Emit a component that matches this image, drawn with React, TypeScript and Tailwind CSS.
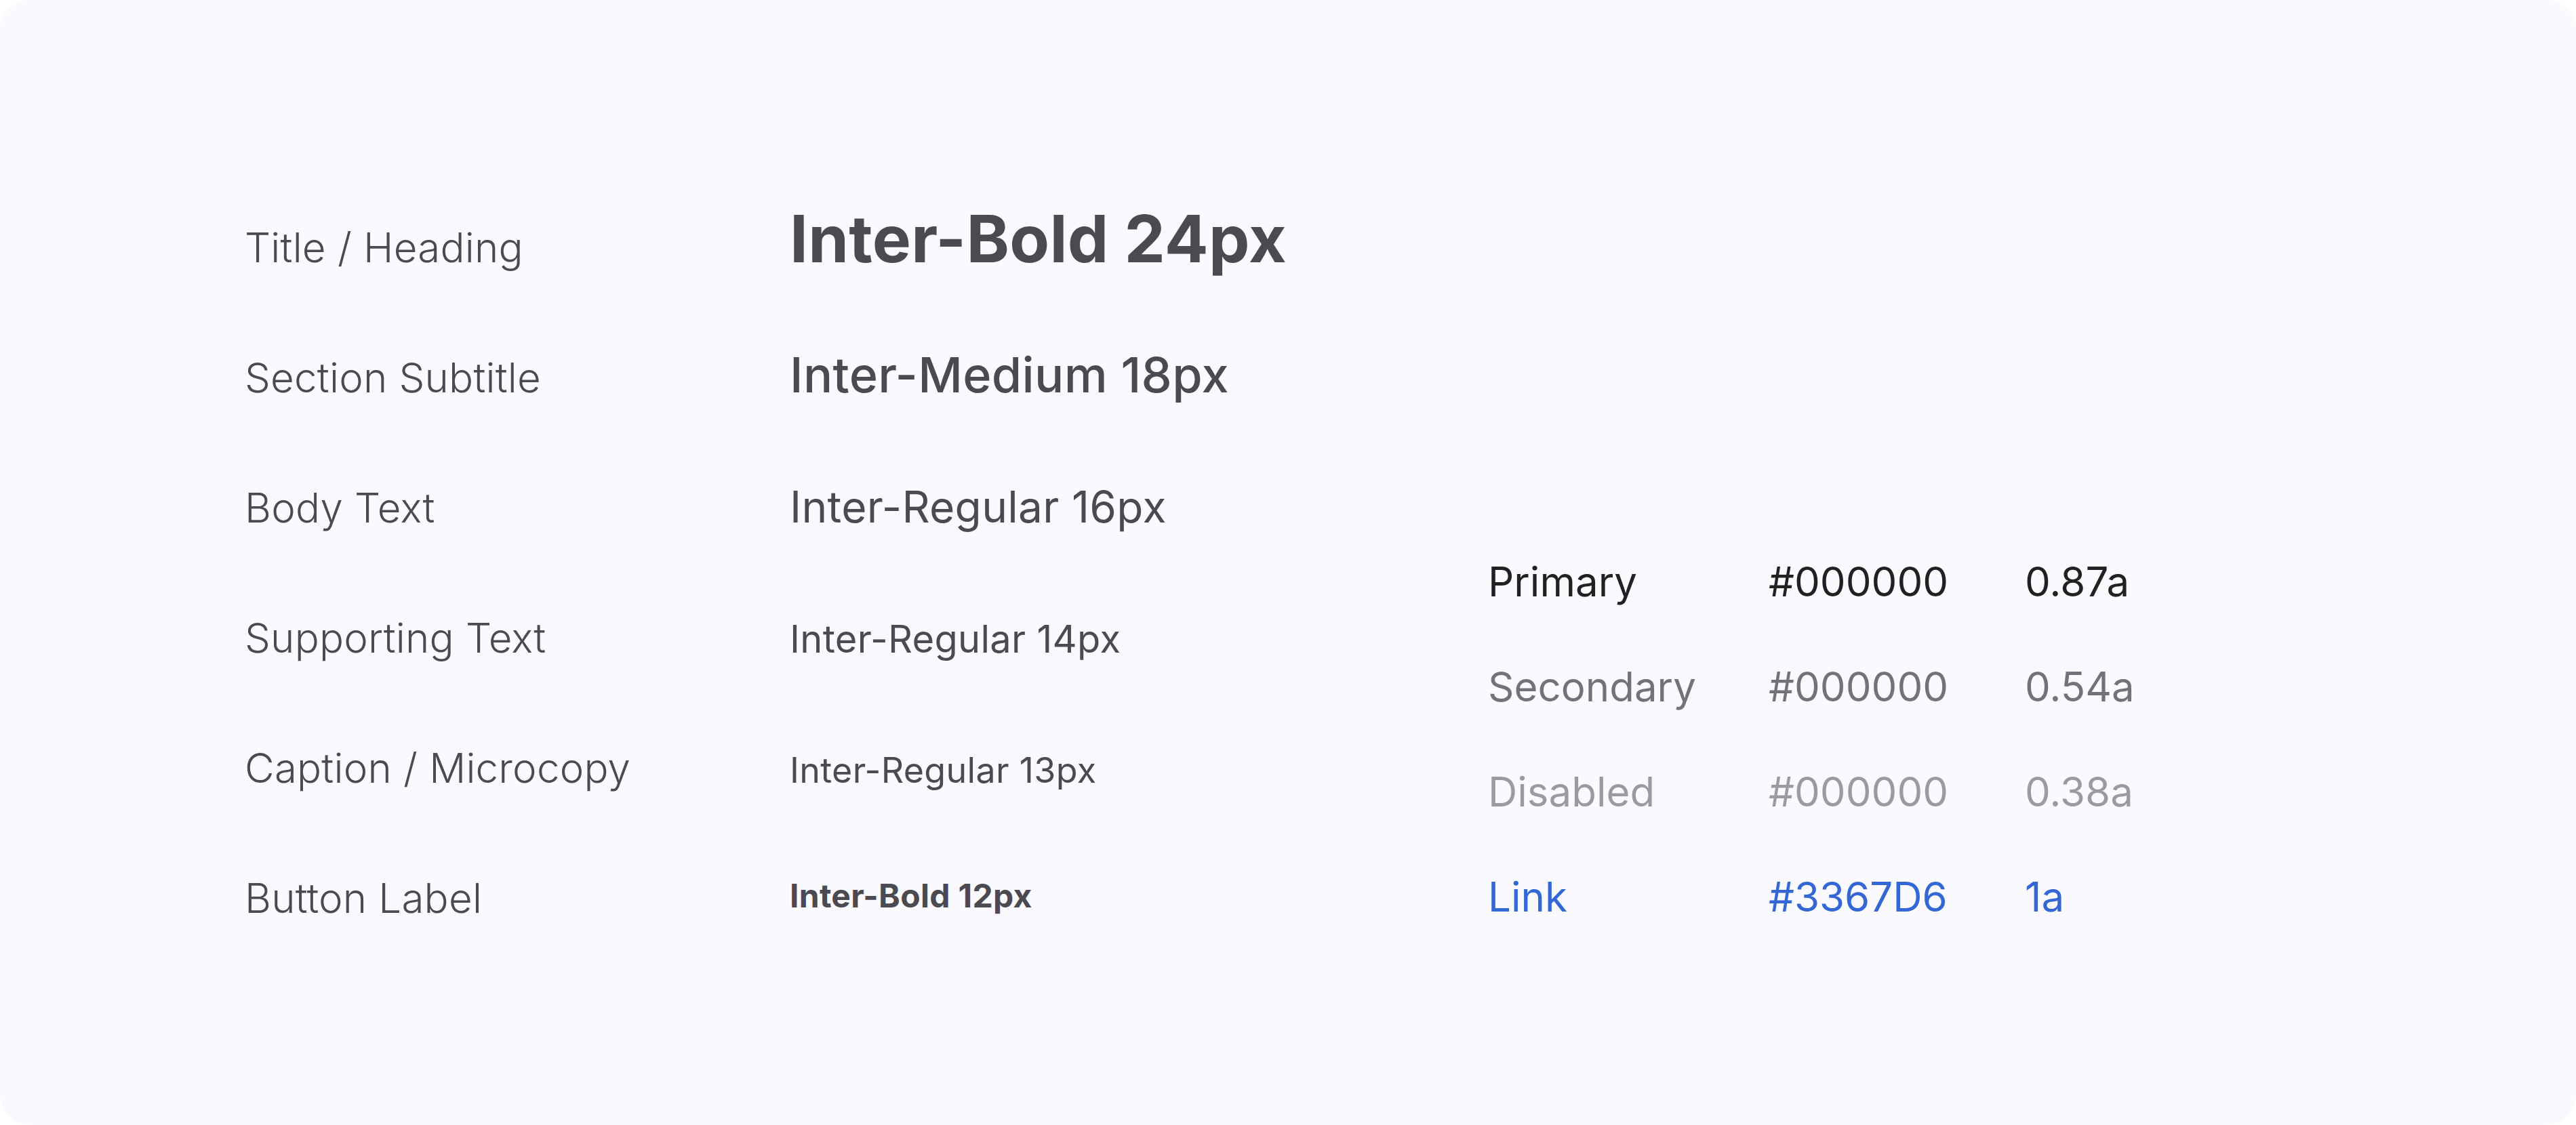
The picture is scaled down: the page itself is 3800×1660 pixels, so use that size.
import React from 'react';

const styles = [
  { label: 'Title / Heading', value: 'Inter-Bold 24px', cls: 'text-[96px] font-bold' },
  { label: 'Section Subtitle', value: 'Inter-Medium 18px', cls: 'text-[72px] font-medium' },
  { label: 'Body Text', value: 'Inter-Regular 16px', cls: 'text-[64px] font-normal' },
  { label: 'Supporting Text', value: 'Inter-Regular 14px', cls: 'text-[56px] font-normal' },
  { label: 'Caption / Microcopy', value: 'Inter-Regular 13px', cls: 'text-[52px] font-normal' },
  { label: 'Button Label', value: 'Inter-Bold 12px', cls: 'text-[48px] font-bold -translate-y-2' },
];

const colors = [
  { name: 'Primary', hex: '#000000', alpha: '0.87a', cls: 'text-black/[0.87]' },
  { name: 'Secondary', hex: '#000000', alpha: '0.54a', cls: 'text-black/[0.54]' },
  { name: 'Disabled', hex: '#000000', alpha: '0.38a', cls: 'text-black/[0.38]' },
  { name: 'Link', hex: '#3367D6', alpha: '1a', cls: 'text-[#3367d6]' },
];

export default function App() {
  return (
    <div className="h-[1660px] w-[3800px] bg-white font-[Inter,sans-serif]">
      <div className="flex h-full w-full items-start rounded-[44px] bg-[#faf9fe] pl-[361px]">
        {/* Type scale */}
        <div className="flex w-[1834px] shrink-0 flex-col pt-[269px] text-[#4b4a50]">
          {styles.map((s) => (
            <div key={s.label} className="flex items-baseline">
              <span className="w-[804px] text-[60px] font-light leading-[192px] tracking-[0.2px]">{s.label}</span>
              <span className={`leading-none tracking-[0.3px] ${s.cls}`}>{s.value}</span>
            </div>
          ))}
        </div>

        {/* Text colours */}
        <div className="flex flex-col pt-[781px] text-[60px] leading-[155px]">
          {colors.map((c) => (
            <div key={c.name} className={`flex ${c.cls}`}>
              <span className="w-[414px]">{c.name}</span>
              <span className="w-[378px]">{c.hex}</span>
              <span>{c.alpha}</span>
            </div>
          ))}
        </div>
      </div>
    </div>
  );
}
